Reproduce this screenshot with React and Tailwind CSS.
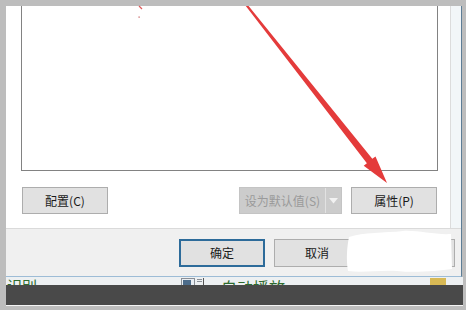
import React from 'react';

const FONT = { fontFamily: '"Noto Sans CJK SC", "Liberation Sans", sans-serif' };

// ── Plain win10 push button ─────────────────────────────
const Btn = ({ children, className = '' }) => (
  <div className={`h-[27px] w-[86px] flex items-center justify-center bg-[#e1e1e1] border border-[#adadad] text-[12px] text-[#1a1a1a] ${className}`}>
    {children}
  </div>
);

export default function App() {
  return (
    <div className="relative w-[466px] h-[310px] overflow-hidden bg-[#bdbdbd] pl-[6px] pt-[6px] flex flex-col" style={FONT}>
      {/* Dialog */}
      <div className="w-[456px] h-[271px] flex flex-col border-r border-b border-r-[#5d7d96] border-b-[#9dbcd6]">
        <div className="h-[223px] flex border-b border-[#dadada]">
          <div className="w-[445px] bg-white border-r border-[#dcdcdc] pl-[15px]">
            <div className="w-[417px] h-[165px] border-l border-r border-b border-[#828282] bg-white" />
            <div className="mt-[16px] ml-[1px] w-[415px] flex justify-between">
              <Btn>配置(C)</Btn>
              <div className="flex gap-[9px]">
                <div className="h-[27px] w-[103px] flex bg-[#cccccc] border border-[#c4c4c4] text-[12px] text-[#9a9a9a]">
                  <div className="flex-1 flex items-center justify-center border-r border-[#e2e2e2]">设为默认值(S)</div>
                  <div className="w-[15px] flex items-center justify-center">
                    <svg width="9" height="6" viewBox="0 0 9 6"><path d="M0 0 L9 0 L4.5 5.5 Z" fill="#f2f2f2" /></svg>
                  </div>
                </div>
                <Btn>属性(P)</Btn>
              </div>
            </div>
          </div>
          <div className="flex-1 bg-[#f2f6f8]" />
        </div>
        <div className="flex-1 bg-[#f0f0f0] pt-[10px] pl-[173px] flex gap-[9px]">
          <div className="h-[28px] w-[86px] flex items-center justify-center bg-[#e1e1e1] border-2 border-[#2d6b9a] text-[12px] text-[#1a1a1a]">确定</div>
          <Btn className="h-[28px]">取消</Btn>
          <Btn className="h-[28px]">应用(A)</Btn>
        </div>
      </div>

      {/* Taskbar strip, cut off */}
      <div className="w-[457px] h-[8px] bg-[#edf0f2] overflow-hidden flex items-start text-[15px] leading-[15px] text-[#2e6b2e]">
        <span className="ml-[1px] mt-[1px]">识别</span>
        <div className="ml-[144px] mt-[1px] flex items-start">
          <div className="w-[14px] h-[10px] border border-[#8a8f96] bg-[#e9eef3] p-[1px]">
            <div className="w-[8px] h-[6px] bg-[#4d6c8a]" />
          </div>
          <div className="ml-[2px] w-[5px] flex flex-col gap-[1px] pt-[1px]">
            <div className="h-px bg-[#8a8f96]" />
            <div className="h-px bg-[#8a8f96]" />
          </div>
          <div className="ml-[1px] w-px h-[8px] bg-[#555]" />
        </div>
        <span className="ml-[17px] mt-[2px] text-[16px] leading-[16px]">自动播放</span>
        <div className="ml-[145px] mt-[1px] w-[16px] h-[8px] bg-[#d8b955]" />
      </div>
      <div className="w-[457px] h-[20px] bg-[#494949]" />
      <div className="w-[457px] h-px bg-[#f4f4f4]" />

      {/* White scribble covering a button */}
      <svg className="absolute left-[345px] top-[229px]" width="110" height="46" viewBox="0 0 110 46">
        <path d="M4 8 C18 3 40 4 58 2 C72 1 90 6 106 5 L107 40 C92 42 70 44 52 42 C34 41 18 44 3 42 C1 30 2 18 4 8 Z" fill="#ffffff" />
      </svg>

      {/* Red annotation arrow */}
      <svg className="absolute left-0 top-0" width="466" height="310" viewBox="0 0 466 310">
        <polygon points="245.8,6 248.6,6 372.3,158.8 375.5,156.4 387,183 363.7,165.7 366.9,163.2" fill="#e43b3b" />
        <path d="M139 6 L142 9" stroke="#e05a5a" strokeWidth="1.2" />
        <rect x="138.5" y="16.5" width="1.2" height="1.2" fill="#c05050" />
      </svg>
    </div>
  );
}
